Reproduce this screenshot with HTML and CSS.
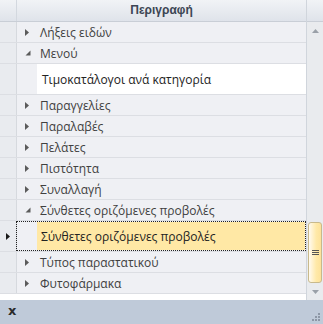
FILE: index.html
```html
<!DOCTYPE html>
<html>
<head>
<meta charset="utf-8">
<link rel="stylesheet" href="styles.css">
</head>
<body>
<div class="grid">
  <div class="main">
    <div class="header">
      <div class="ind-h"></div>
      <div class="title">Περιγραφή</div>
    </div>
    <div class="rows">
      <div class="row"><div class="ind"></div><div class="cell"><span class="exp"><svg width="5" height="7" viewBox="0 0 5 7"><path d="M0 0L4 3.5L0 7Z" fill="#5b5b5b"/></svg></span>Λήξεις ειδών</div></div>
      <div class="row"><div class="ind"></div><div class="cell"><span class="exp"><svg width="6" height="6" viewBox="0 0 6 6"><path d="M5.5 0.5L5.5 5.5L0.5 5.5Z" fill="#5b5b5b"/></svg></span>Μενού</div></div>
      <div class="row detail"><div class="ind"></div><div class="gap"></div><div class="dcell">Τιμοκατάλογοι ανά κατηγορία</div></div>
      <div class="row"><div class="ind"></div><div class="cell"><span class="exp"><svg width="5" height="7" viewBox="0 0 5 7"><path d="M0 0L4 3.5L0 7Z" fill="#5b5b5b"/></svg></span>Παραγγελίες</div></div>
      <div class="row"><div class="ind"></div><div class="cell"><span class="exp"><svg width="5" height="7" viewBox="0 0 5 7"><path d="M0 0L4 3.5L0 7Z" fill="#5b5b5b"/></svg></span>Παραλαβές</div></div>
      <div class="row"><div class="ind"></div><div class="cell"><span class="exp"><svg width="5" height="7" viewBox="0 0 5 7"><path d="M0 0L4 3.5L0 7Z" fill="#5b5b5b"/></svg></span>Πελάτες</div></div>
      <div class="row"><div class="ind"></div><div class="cell"><span class="exp"><svg width="5" height="7" viewBox="0 0 5 7"><path d="M0 0L4 3.5L0 7Z" fill="#5b5b5b"/></svg></span>Πιστότητα</div></div>
      <div class="row"><div class="ind"></div><div class="cell"><span class="exp"><svg width="5" height="7" viewBox="0 0 5 7"><path d="M0 0L4 3.5L0 7Z" fill="#5b5b5b"/></svg></span>Συναλλαγή</div></div>
      <div class="row"><div class="ind"></div><div class="cell"><span class="exp"><svg width="6" height="6" viewBox="0 0 6 6"><path d="M5.5 0.5L5.5 5.5L0.5 5.5Z" fill="#5b5b5b"/></svg></span>Σύνθετες οριζόμενες προβολές</div></div>
      <div class="row detail sel"><div class="ind"><svg width="4" height="7" viewBox="0 0 4 7"><path d="M0 0L4 3.5L0 7Z" fill="#1a1a1a"/></svg></div><div class="focus"><div class="gap"></div><div class="dcell">Σύνθετες οριζόμενες προβολές</div></div></div>
      <div class="row"><div class="ind"></div><div class="cell"><span class="exp"><svg width="5" height="7" viewBox="0 0 5 7"><path d="M0 0L4 3.5L0 7Z" fill="#5b5b5b"/></svg></span>Τύπος παραστατικού</div></div>
      <div class="row"><div class="ind"></div><div class="cell"><span class="exp"><svg width="5" height="7" viewBox="0 0 5 7"><path d="M0 0L4 3.5L0 7Z" fill="#5b5b5b"/></svg></span>Φυτοφάρμακα</div></div>
    </div>
  </div>
  <div class="scroll">
    <div class="corner"></div>
    <div class="track">
      <div class="arrow up"><svg width="7" height="4" viewBox="0 0 7 4"><path d="M0 4L3.5 0L7 4Z" fill="#9aa0a8"/></svg></div>
      <div class="space top"></div>
      <div class="thumb"><span class="grip"><i></i><i></i><i></i></span></div>
      <div class="arrow down"><svg width="7" height="4" viewBox="0 0 7 4"><path d="M0 0L3.5 4L7 0Z" fill="#9aa0a8"/></svg></div>
    </div>
  </div>
</div>
<div class="footer">
  <span class="close">x</span>
  <svg class="sizer" width="9" height="9" viewBox="0 0 9 9">
    <rect x="6" y="0" width="2" height="2" fill="#8d97a6"/>
    <rect x="3" y="3" width="2" height="2" fill="#8d97a6"/>
    <rect x="6" y="3" width="2" height="2" fill="#8d97a6"/>
    <rect x="0" y="6" width="2" height="2" fill="#8d97a6"/>
    <rect x="3" y="6" width="2" height="2" fill="#8d97a6"/>
    <rect x="6" y="6" width="2" height="2" fill="#8d97a6"/>
  </svg>
</div>
</body>
</html>
```

FILE: styles.css
```css
* { box-sizing: border-box; }
html, body { margin: 0; padding: 0; }
body {
  width: 323px;
  height: 324px;
  overflow: hidden;
  background: #ffffff;
  font-family: "Open Sans", "Noto Sans", sans-serif;
  color: #404040;
}
.grid {
  display: flex;
  height: 300px;
  background: #ffffff;
}
.main {
  width: 306px;
  display: flex;
  flex-direction: column;
}
.header {
  height: 22px;
  display: flex;
  background: linear-gradient(#f1f3f6, #dfe3ea);
  border-bottom: 1px solid #c9ced6;
}
.ind-h {
  width: 17px;
  border-right: 1px solid #d3d8df;
}
.title {
  flex: 1;
  text-align: center;
  font-family: "Liberation Sans", "DejaVu Sans", sans-serif;
  font-weight: bold;
  font-size: 12px;
  line-height: 21px;
  color: #3d4654;
}
.rows {
  display: flex;
  flex-direction: column;
}
.row {
  display: flex;
  height: 21px;
  background: #eff0f4;
  border-bottom: 1px solid #dcdee3;
}
.ind {
  width: 17px;
  flex: none;
  background: #e9ebef;
  border-right: 1px solid #d6d9de;
  display: flex;
  align-items: center;
  justify-content: center;
  padding-right: 1px;
}
.cell {
  flex: 1;
  display: flex;
  align-items: center;
  font-size: 12px;
  padding-left: 8px;
  white-space: nowrap;
}
.exp {
  width: 15px;
  display: flex;
  align-items: center;
}
.row.detail {
  height: 31px;
}
.gap {
  width: 20px;
  flex: none;
}
.dcell {
  flex: 1;
  background: #ffffff;
  font-size: 12px;
  display: flex;
  align-items: center;
  padding-left: 5px;
  color: #222;
  white-space: nowrap;
}
.focus {
  flex: 1;
  display: flex;
  border: 1px dotted #222;
  margin-left: -1px;
}
.sel .dcell {
  background: #ffe8a5;
  padding-left: 4px;
}
.scroll {
  width: 17px;
  display: flex;
  flex-direction: column;
  border-left: 1px solid #d0d5dc;
}
.corner {
  height: 22px;
  background: linear-gradient(#f1f3f6, #dfe3ea);
  border-bottom: 1px solid #c9ced6;
}
.track {
  flex: 1;
  background: #e9ebee;
  display: flex;
  flex-direction: column;
}
.arrow {
  height: 17px;
  display: flex;
  align-items: center;
  justify-content: center;
}
.space.top { flex: 1; }
.thumb {
  height: 61px;
  margin: 0 1px;
  border: 1px solid #c8b98c;
  border-radius: 3px;
  background: linear-gradient(90deg, #fffaf0, #ffe9a8 60%, #fde29a);
  display: flex;
  align-items: center;
  justify-content: center;
}
.grip {
  display: flex;
  flex-direction: column;
  gap: 1px;
}
.grip i {
  display: block;
  width: 7px;
  height: 1px;
  background: #555;
}
.footer {
  height: 24px;
  background: #bfcad9;
  display: flex;
  align-items: center;
  justify-content: space-between;
  padding: 0 2px 0 8px;
}
.close {
  font-family: "DejaVu Sans", sans-serif;
  font-weight: bold;
  font-size: 13px;
  color: #2b2b2b;
  line-height: 1;
  margin-top: -4px;
}
.sizer {
  align-self: flex-end;
  margin-bottom: 2px;
}
```
